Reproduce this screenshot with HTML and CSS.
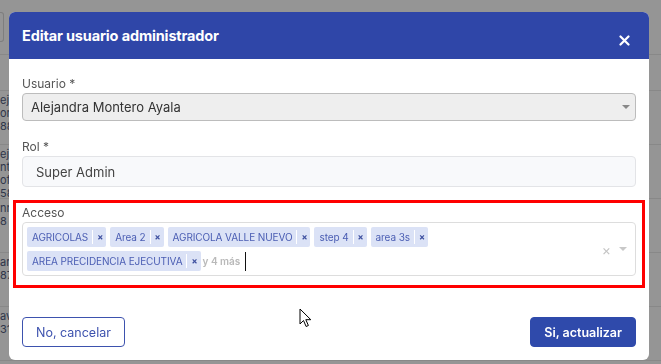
FILE: index.html
```html
<!DOCTYPE html>
<html lang="es">
<head>
    <meta charset="UTF-8">
    <meta name="viewport" content="width=device-width, initial-scale=1.0">
    <title>Editar usuario administrador</title>
    <link rel="stylesheet" href="styles.css">
</head>
<body>
    <div class="page">
        <div class="toolbar"><div class="search"></div></div>
        <div class="table">
            <div class="row"><span>ej</span><span>or</span><span>88</span></div>
            <div class="row"><span>ej</span><span>nt</span><span>ofi</span><span>58</span></div>
            <div class="row"><span>nn</span><span>8</span></div>
            <div class="row"><span>ar</span><span>87</span></div>
            <div class="row"><span>av</span><span>31</span></div>
        </div>
    </div>

    <div class="overlay">
        <div class="modal">
            <div class="modal-header">
                <h2>Editar usuario administrador</h2>
                <button class="close-btn" aria-label="Cerrar">
                    <svg width="11" height="11" viewBox="0 0 11 11"><path d="M1.5 1.5l8 8M9.5 1.5l-8 8" stroke="#fff" stroke-width="2.2" stroke-linecap="round"/></svg>
                </button>
            </div>
            <div class="modal-body">
                <div class="field">
                    <label>Usuario *</label>
                    <div class="select">
                        <span>Alejandra Montero Ayala</span>
                        <i class="arrow"></i>
                    </div>
                </div>
                <div class="field">
                    <label>Rol *</label>
                    <div class="input">Super Admin</div>
                </div>
                <div class="field field-marked">
                    <label>Acceso</label>
                    <div class="multi">
                        <div class="chips">
                            <span class="chip">AGRICOLAS<b>×</b></span>
                            <span class="chip">Area 2<b>×</b></span>
                            <span class="chip">AGRICOLA VALLE NUEVO<b>×</b></span>
                            <span class="chip">step 4<b>×</b></span>
                            <span class="chip">area 3s<b>×</b></span>
                            <span class="chip">AREA PRECIDENCIA EJECUTIVA<b>×</b></span>
                            <span class="more">y 4 más</span>
                            <span class="caret"></span>
                        </div>
                        <div class="multi-tools">
                            <span class="clear">×</span>
                            <i class="arrow light"></i>
                        </div>
                    </div>
                </div>
            </div>
            <div class="modal-footer">
                <button class="btn btn-outline">No, cancelar</button>
                <button class="btn btn-primary">Si, actualizar</button>
            </div>
            <svg class="cursor" width="14" height="21" viewBox="0 0 14 21"><path d="M1 1v15l3.5-3.5 2.6 6 2.3-1-2.6-5.8h5z" fill="#fff" stroke="#000" stroke-width="1" stroke-linejoin="round"/></svg>
        </div>
    </div>
</body>
</html>
```

FILE: styles.css
```css
body {
    margin: 0;
    font-family: 'Inter', 'Noto Sans', sans-serif;
    background-color: #959595;
    color: #333;
    overflow: hidden;
}

/* page behind the dialog */
.page {
    height: 364px;
}

.toolbar {
    height: 55px;
    border-bottom: 1px solid #888;
    box-sizing: border-box;
    padding-top: 12px;
}

.toolbar .search {
    width: 3px;
    height: 28px;
    border: 1px solid #7e7e7e;
    border-left: none;
    border-radius: 0 3px 3px 0;
}

.table {
    margin-top: 35px;
    border-top: 1px solid #888;
}

.row {
    height: 54px;
    border-bottom: 1px solid #888;
    box-sizing: border-box;
    padding-top: 3px;
    font-size: 11px;
    line-height: 13px;
    color: #2f364a;
}

.row span {
    display: block;
    white-space: nowrap;
}

/* dialog */
.overlay {
    position: fixed;
    top: 0;
    left: 0;
    right: 0;
    bottom: 0;
    padding: 12px 0 0 9px;
}

.modal {
    position: relative;
    width: 640px;
    height: 348px;
    background-color: #fff;
    border-radius: 6px;
    display: flex;
    flex-direction: column;
}

.modal-header {
    height: 47px;
    background-color: #2f46a8;
    border-radius: 6px 6px 0 0;
    display: flex;
    align-items: center;
    justify-content: space-between;
    padding: 0 19px 0 13px;
}

.modal-header h2 {
    margin: 0;
    color: #fff;
    font-size: 14.5px;
    font-weight: 700;
    letter-spacing: -0.15px;
}

.close-btn {
    background: none;
    border: none;
    padding: 0;
    margin-top: 9px;
    display: flex;
}

.modal-body {
    padding: 16px 13px 0;
}

.field label {
    display: block;
    font-size: 12px;
    line-height: 18px;
    color: #555;
}

.field + .field {
    margin-top: 17px;
}

.select {
    height: 28px;
    box-sizing: border-box;
    background-color: #eee;
    border: 1px solid #bcbcbc;
    border-radius: 4px;
    display: flex;
    align-items: center;
    justify-content: space-between;
    padding: 0 5px 0 8px;
    font-size: 13px;
    color: #333;
}

.arrow {
    width: 0;
    height: 0;
    border-left: 4px solid transparent;
    border-right: 4px solid transparent;
    border-top: 4px solid #888;
}

.arrow.light {
    border-top-color: #c8c8c8;
}

.input {
    height: 31px;
    box-sizing: border-box;
    background-color: #f8f9fb;
    border: 1px solid #e3e4e7;
    border-radius: 4px;
    padding: 0 13px;
    display: flex;
    align-items: center;
    font-size: 13px;
    color: #444;
}

.field-marked {
    margin: 0 -9px;
    border: 3px solid #f00;
    padding: 1px 6px 9px;
}

.field + .field-marked {
    margin-top: 13px;
}

.multi {
    height: 54px;
    box-sizing: border-box;
    border: 1px solid #ddd;
    border-radius: 4px;
    display: flex;
    align-items: center;
    padding: 0 8px 0 4px;
}

.chips {
    flex: 1;
    align-self: flex-start;
    display: flex;
    flex-wrap: wrap;
    align-items: center;
    gap: 4px;
    padding-top: 4px;
}

.chip {
    height: 20px;
    display: flex;
    align-items: center;
    background-color: #dbe2f6;
    border-radius: 2px;
    padding-left: 5px;
    font-size: 10px;
    letter-spacing: -0.1px;
    color: #4a5db3;
}

.chip b {
    margin-left: 4px;
    border-left: 1px solid #fff;
    padding: 0 3px 0 4px;
    line-height: 14px;
    font-size: 9px;
    color: #3d4f9f;
}

.more {
    font-size: 10px;
    font-weight: 600;
    color: #b9b9b9;
    margin-left: -2px;
}

.caret {
    width: 1px;
    height: 19px;
    background-color: #111;
    margin-left: 1px;
}

.multi-tools {
    display: flex;
    align-items: center;
    gap: 8px;
}

.clear {
    font-size: 14px;
    color: #c4c4c4;
}

.modal-footer {
    margin-top: auto;
    padding: 0 13px 13px;
    display: flex;
    justify-content: space-between;
}

.btn {
    height: 30px;
    border-radius: 4px;
    font-family: 'Inter', 'Noto Sans', sans-serif;
    font-size: 12.5px;
    padding: 0 13px;
}

.btn-outline {
    background-color: #fff;
    border: 1px solid #3d52ae;
    color: #3d52ae;
}

.btn-primary {
    background-color: #2f4aab;
    border: 1px solid #2f4aab;
    color: #fff;
    font-weight: 600;
}

.cursor {
    position: absolute;
    left: 290px;
    top: 296px;
}
```
